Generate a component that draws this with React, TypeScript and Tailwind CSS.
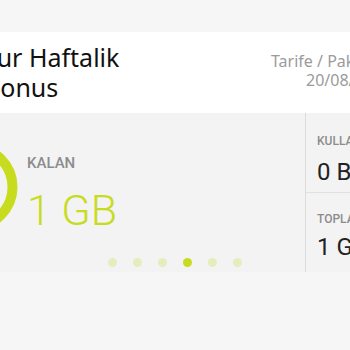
import React from 'react'

const dots = [false, false, false, true, false, false]

export default function App() {
  return (
    <div className="w-[350px] h-[350px] overflow-hidden bg-[#f6f6f6] font-['Noto_Sans',sans-serif]">
      <div className="h-[32px]" />

      {/* header card */}
      <div className="h-[81px] bg-white flex overflow-hidden">
        <div className="flex-1 min-w-0 -ml-[16px] pt-[10px] text-[25px] leading-[30px] text-[#111] whitespace-nowrap">
          <div>Tur Haftalik</div>
          <div>Bonus</div>
        </div>
        <div className="w-[79px] shrink-0 pt-[20px] text-[16px] leading-[19px] text-[#9b9b9b] whitespace-nowrap">
          <div>Tarife / Paket Bitiş</div>
          <div className="pl-[35px]">20/08/2016</div>
        </div>
      </div>

      {/* usage panel */}
      <div className="h-[159px] bg-[#f3f3f3] flex font-['Roboto',sans-serif]">
        <div className="w-[305px] shrink-0 flex flex-col overflow-hidden">
          <div className="flex items-start">
            <svg width="90" height="90" viewBox="0 0 90 90" className="shrink-0 -ml-[72px] mt-[29px]">
              <circle cx="45" cy="45" r="39.5" fill="none" stroke="#c8dc1f" strokeWidth="10" />
            </svg>
            <div className="ml-[9px] mt-[43px] flex flex-col">
              <div className="text-[15px] leading-[15px] font-medium text-[#8c8c8c]">KALAN</div>
              <div className="mt-[17px] text-[43px] leading-[44px] font-light text-[#c8dc1f] whitespace-nowrap">1 GB</div>
            </div>
          </div>
          <div className="ml-[108px] mt-[26px] flex items-center gap-[16px]">
            {dots.map((on, i) => (
              <div
                key={i}
                className={on ? 'w-[9px] h-[9px] rounded-full bg-[#c8dc1f]' : 'w-[9px] h-[9px] rounded-full bg-[#e6edbd]'}
              />
            ))}
          </div>
        </div>

        <div className="flex-1 min-w-0 overflow-hidden border-l border-[#dcdcdc] flex flex-col whitespace-nowrap">
          <div className="h-[80px] shrink-0 border-b border-[#e0e0e0] pl-[11px] pt-[22px]">
            <div className="text-[12px] leading-[12px] font-medium text-[#8c8c8c]">KULLANILAN</div>
            <div className="mt-[13px] text-[24px] leading-[24px] text-[#222]">0 B</div>
          </div>
          <div className="pl-[11px] pt-[20px]">
            <div className="text-[12px] leading-[12px] font-medium text-[#8c8c8c]">TOPLAM</div>
            <div className="mt-[10px] text-[24px] leading-[24px] text-[#222]">1 GB</div>
          </div>
        </div>
      </div>
    </div>
  )
}
